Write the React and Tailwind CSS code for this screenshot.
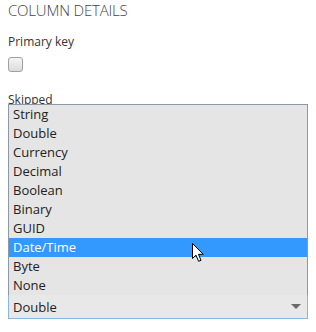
export default function App() {
  const items = ["String","Double","Currency","Decimal","Boolean","Binary","GUID","Date/Time","Byte","None"];
  return (
    <div className="relative w-[316px] h-[332px] bg-white font-['Open_Sans',sans-serif] text-[#222] overflow-hidden">
      <div className="flex flex-col h-[332px] px-2 pb-[13px]">
        <div className="h-[22px] text-[15px] leading-[20px] font-light text-[#444] tracking-[-0.2px]">COLUMN DETAILS</div>
        <div className="mt-[11px] h-[18px] text-[12px] leading-[18px] text-[#333]">Primary key</div>
        <div className="mt-[6px] w-[15px] h-[15px] rounded-[3px] border border-[#a0a0a0] bg-gradient-to-b from-[#f4f4f4] to-[#dcdcdc]"></div>
        <div className="mt-[19px] h-[18px] text-[12px] leading-[18px] text-[#333]">Skipped</div>
        <div className="mt-auto h-[25px] w-[300px] shrink-0 border border-[#86b6e6] bg-[#e8e8e8] flex items-center justify-between pl-[4px] pr-[6px]">
          <span className="text-[13px] leading-[18px]">Double</span>
          <svg width="10" height="6" viewBox="0 0 10 6"><path d="M0 0 L10 0 L5 5 Z" fill="#6b6b6b" /></svg>
        </div>
      </div>
      <div className="absolute left-2 top-[104px] w-[300px] h-[191px] border border-b-0 border-[#8c98a8] bg-[#e5e5e5] flex flex-col">
        {items.map((it) => (
          <div key={it} className={"h-[19px] shrink-0 pl-[4px] text-[13px] leading-[19px] " + (it === "Date/Time" ? "bg-[#3399ff] text-white" : "text-[#222]")}>{it}</div>
        ))}
      </div>
      <svg className="absolute left-[192px] top-[243px]" width="13" height="20" viewBox="0 0 13 20">
        <path d="M0.5 0.5 L0.5 15.5 L4 12.2 L6.6 18.3 L9 17.3 L6.5 11.3 L11.3 11.3 Z" fill="#fff" stroke="#000" strokeWidth="1" strokeLinejoin="miter" />
      </svg>
    </div>
  );
}
